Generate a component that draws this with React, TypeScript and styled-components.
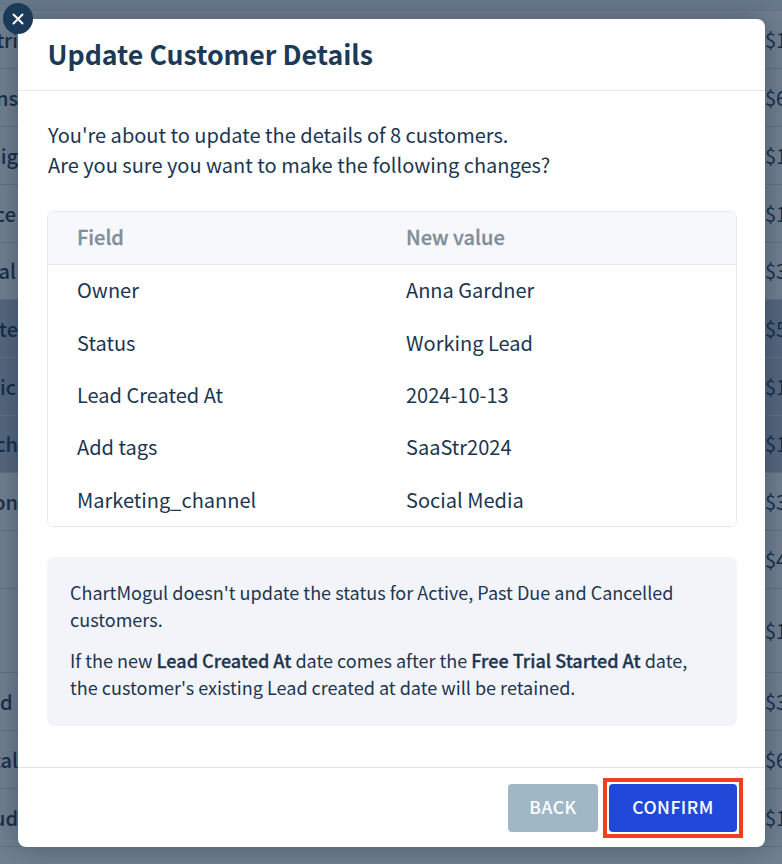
import styled, { createGlobalStyle } from 'styled-components';

const GlobalStyle = createGlobalStyle`
  html, body {
    margin: 0;
    padding: 0;
    height: 100%;
    overflow: hidden;
    font-family: "Noto Sans CJK JP", "Open Sans", sans-serif;
    color: #1c3651;
  }
`;

const Page = styled.div`
  width: 782px;
  height: 864px;
  position: relative;
  overflow: hidden;
  background: #fff;
`;

const BackgroundTable = styled.div`
  display: flex;
  flex-direction: column;
  padding-top: 11px;
  background: #eaf0f7;
`;

const BackgroundRow = styled.div<{ $height: number; $shaded?: boolean }>`
  height: ${(p) => p.$height}px;
  box-sizing: border-box;
  border-bottom: 1px solid #d9dfe6;
  background: ${(p) => (p.$shaded ? '#b9c4d2' : '#fff')};
  display: flex;
  align-items: center;
  justify-content: space-between;
  font-size: 20px;
  line-height: 28px;
  white-space: nowrap;
  overflow: hidden;
`;

const LeftCell = styled.span<{ $start?: boolean; $trim?: number }>`
  width: 18px;
  box-sizing: border-box;
  padding-right: ${(p) => p.$trim ?? 0}px;
  overflow: hidden;
  display: flex;
  justify-content: ${(p) => (p.$start ? 'flex-start' : 'flex-end')};
  white-space: pre;
  font-weight: 500;
`;

const RightCell = styled.span`
  width: 17px;
  overflow: hidden;
`;

const Overlay = styled.div`
  position: absolute;
  inset: 0;
  background: rgba(18, 42, 68, 0.6);
`;

const Modal = styled.div`
  position: absolute;
  left: 18px;
  top: 19px;
  width: 747px;
  height: 828px;
  background: #fff;
  border-radius: 8px;
  box-shadow: 0 0 28px rgba(18, 36, 56, 0.4);
  display: flex;
  flex-direction: column;
`;

const CloseButton = styled.button`
  position: absolute;
  left: 3px;
  top: 3px;
  width: 30px;
  height: 31px;
  padding: 0;
  border: none;
  border-radius: 50%;
  background: #1b3a57;
  display: flex;
  align-items: center;
  justify-content: center;
`;

const Header = styled.header`
  height: 72px;
  box-sizing: border-box;
  border-bottom: 1px solid #e1e6f0;
  padding: 0 30px 2px 29.5px;
  display: flex;
  align-items: center;
`;

const Title = styled.h1`
  margin: 0;
  font-size: 26.7px;
  line-height: 34px;
  font-weight: 700;
  color: #1b3a57;
`;

const Body = styled.div`
  flex: 1;
  padding: 30px 28px 0 29px;
`;

const Intro = styled.p`
  margin: 0 0 30px 1px;
  font-size: 20px;
  line-height: 30px;
  position: relative;
  top: -1px;
`;

const FieldTable = styled.div`
  border: 1px solid #e4e8f1;
  border-radius: 7px;
  overflow: hidden;
  height: 316px;
  box-sizing: border-box;
`;

const FieldRow = styled.div<{ $head?: boolean }>`
  height: ${(p) => (p.$head ? 53 : 52.4)}px;
  box-sizing: border-box;
  display: grid;
  grid-template-columns: 329px 1fr;
  align-items: center;
  padding: 0 0 ${(p) => (p.$head ? 4 : 3)}px 29px;
  font-size: 20px;
  font-weight: ${(p) => (p.$head ? 500 : 400)};
  -webkit-text-stroke: ${(p) => (p.$head ? '0.3px' : '0')};
  color: ${(p) => (p.$head ? '#7f8e99' : '#1c3651')};
  background: ${(p) => (p.$head ? '#f7f8fc' : '#fff')};
  border-bottom: ${(p) => (p.$head ? '1px solid #e4e8f1' : 'none')};
`;

const Note = styled.div`
  margin-top: 30px;
  height: 169px;
  box-sizing: border-box;
  padding: 22px 23px;
  border-radius: 7px;
  background: #f3f4fa;
  font-size: 18.05px;
  line-height: 27px;
`;

const NoteText = styled.p`
  margin: 0 0 14px;
`;

const NoteStrong = styled.strong`
  font-weight: 500;
  -webkit-text-stroke: 0.3px;
`;

const Footer = styled.footer`
  height: 80px;
  box-sizing: border-box;
  border-top: 1px solid #e1e3e9;
  padding: 16px 28px 0 0;
  display: flex;
  justify-content: flex-end;
  align-items: flex-start;
  gap: 11px;
`;

const ActionButton = styled.button<{ $primary?: boolean }>`
  width: ${(p) => (p.$primary ? 128 : 90)}px;
  height: 48px;
  padding: 0 0 3px;
  border: none;
  border-radius: 4px;
  background: ${(p) => (p.$primary ? '#2149d9' : '#a0b8c6')};
  color: #fff;
  font-family: inherit;
  font-size: 17.5px;
  font-weight: 500;
  letter-spacing: 0.5px;
  position: relative;

  ${(p) =>
    p.$primary &&
    `
    &::after {
      content: "";
      position: absolute;
      inset: -6px;
      border: 4px solid #ee3f24;
    }
  `}
`;

const rows = [
  { height: 58, left: 'tri', right: '$1' },
  { height: 58, left: 'ns', right: '$6' },
  { height: 58, left: 'sig', right: '$1' },
  { height: 58, left: 'ce', right: '$1', trim: 2 },
  { height: 57, left: 'al', right: '$3', trim: 2 },
  { height: 58, left: 'te', right: '$5', shaded: true },
  { height: 58, left: 'ic', right: '$1', shaded: true, start: true },
  { height: 57, left: 'ch', right: '$1', shaded: true },
  { height: 58, left: 'on', right: '$3' },
  { height: 58, left: '', right: '$4' },
  { height: 84, left: '', right: '$1' },
  { height: 58, left: 'd I', right: '$3', start: true },
  { height: 58, left: 'tal', right: '$6' },
  { height: 58, left: 'ud', right: '$1' },
  { height: 30, left: '', right: '' },
];

const changes = [
  ['Owner', 'Anna Gardner'],
  ['Status', 'Working Lead'],
  ['Lead Created At', '2024-10-13'],
  ['Add tags', 'SaaStr2024'],
  ['Marketing_channel', 'Social Media'],
];

export default function App() {
  return (
    <Page>
      <GlobalStyle />
      <BackgroundTable>
        {rows.map((row, i) => (
          <BackgroundRow key={i} $height={row.height} $shaded={row.shaded}>
            <LeftCell $start={row.start} $trim={row.trim}>
              {row.left}
            </LeftCell>
            <RightCell>{row.right}</RightCell>
          </BackgroundRow>
        ))}
      </BackgroundTable>
      <Overlay />
      <Modal>
        <Header>
          <Title>Update Customer Details</Title>
        </Header>
        <Body>
          <Intro>
            You're about to update the details of 8 customers.
            <br />
            Are you sure you want to make the following changes?
          </Intro>
          <FieldTable>
            <FieldRow $head>
              <span>Field</span>
              <span>New value</span>
            </FieldRow>
            {changes.map(([field, value]) => (
              <FieldRow key={field}>
                <span>{field}</span>
                <span>{value}</span>
              </FieldRow>
            ))}
          </FieldTable>
          <Note>
            <NoteText>
              ChartMogul doesn't update the status for Active, Past Due and Cancelled customers.
            </NoteText>
            <NoteText>
              If the new <NoteStrong>Lead Created At</NoteStrong> date comes after the{' '}
              <NoteStrong>Free Trial Started At</NoteStrong> date, the customer's existing Lead
              created at date will be retained.
            </NoteText>
          </Note>
        </Body>
        <Footer>
          <ActionButton>BACK</ActionButton>
          <ActionButton $primary>CONFIRM</ActionButton>
        </Footer>
      </Modal>
      <CloseButton aria-label="Close">
        <svg width="14" height="14" viewBox="0 0 14 14" fill="none">
          <path d="M2.5 2.5l9 9M11.5 2.5l-9 9" stroke="#fff" strokeWidth="2" strokeLinecap="round" />
        </svg>
      </CloseButton>
    </Page>
  );
}
